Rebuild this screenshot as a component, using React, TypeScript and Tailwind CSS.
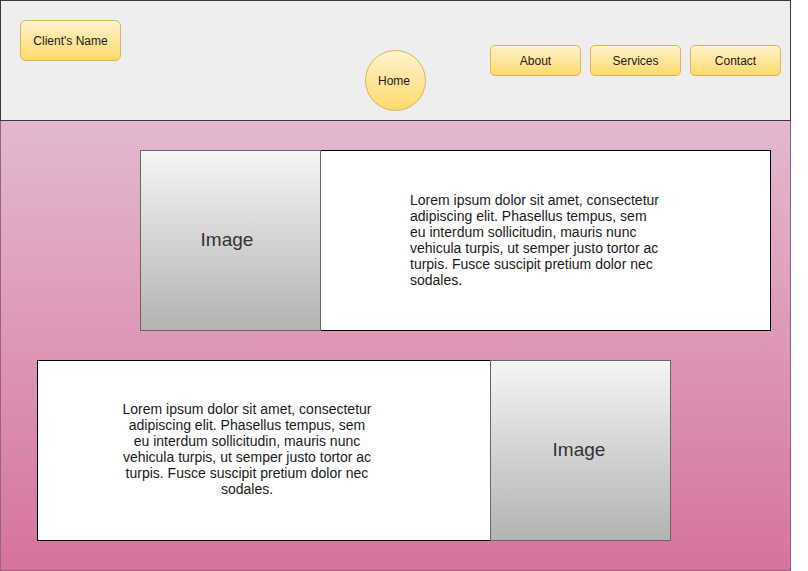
const lorem =
  'Lorem ipsum dolor sit amet, consectetur adipiscing elit. Phasellus tempus, sem eu interdum sollicitudin, mauris nunc vehicula turpis, ut semper justo tortor ac turpis. Fusce suscipit pretium dolor nec sodales.';

function NavButton({ label }: { label: string }) {
  return (
    <div className="flex h-[31px] w-[91px] items-center justify-center rounded-[5px] border border-[#d6b656] bg-gradient-to-b from-[#fff2cc] to-[#ffd966] text-[12px] text-[#1a1a1a]">
      {label}
    </div>
  );
}

function ImageBox({ className }: { className: string }) {
  return (
    <div
      className={`flex h-[181px] items-center justify-center bg-gradient-to-b from-[#f5f5f5] to-[#b3b3b3] text-[19px] text-[#333333] ${className}`}
    >
      Image
    </div>
  );
}

export default function App() {
  return (
    <div className="h-[571px] w-[808px] bg-white font-['Liberation_Sans',Arial,sans-serif]">
      <div className="w-[791px]">
        {/* Header */}
        <div className="flex h-[121px] items-start border border-[#36393d] bg-[#eeeeee] pl-[19px] pt-[19px]">
          <div className="flex h-[41px] w-[101px] items-center justify-center rounded-[6px] border border-[#d6b656] bg-gradient-to-b from-[#fff2cc] to-[#ffd966] text-[12px] text-[#1a1a1a]">
            Client's Name
          </div>
          <div className="ml-[244px] mt-[30px] flex h-[61px] w-[61px] items-center justify-center rounded-full border border-[#d6b656] bg-gradient-to-b from-[#fff2cc] to-[#ffd966] pr-[3px] text-[12px] text-[#1a1a1a]">
            Home
          </div>
          <div className="ml-[64px] mt-[25px] flex gap-[9px]">
            <NavButton label="About" />
            <NavButton label="Services" />
            <NavButton label="Contact" />
          </div>
        </div>

        {/* Content */}
        <div className="h-[450px] border-x border-b border-[#996185] bg-gradient-to-b from-[#e3b9cf] to-[#d5739d] pt-[29px]">
          <div className="ml-[139px] flex">
            <ImageBox className="w-[181px] border border-[#666666] pr-[7px]" />
            <div className="flex h-[181px] w-[450px] items-center border-y border-r border-black bg-white pb-[2px] pl-[89px]">
              <p className="w-[254px] text-[14px] leading-[16px] text-[#1a1a1a]">{lorem}</p>
            </div>
          </div>

          <div className="ml-[36px] mt-[29px] flex">
            <div className="flex h-[181px] w-[453px] items-center border-y border-l border-black bg-white pb-[4px] pl-[82px]">
              <p className="w-[254px] text-center text-[14px] leading-[16px] text-[#1a1a1a]">{lorem}</p>
            </div>
            <ImageBox className="w-[181px] border border-[#666666] pr-[3px]" />
          </div>
        </div>
      </div>
    </div>
  );
}
